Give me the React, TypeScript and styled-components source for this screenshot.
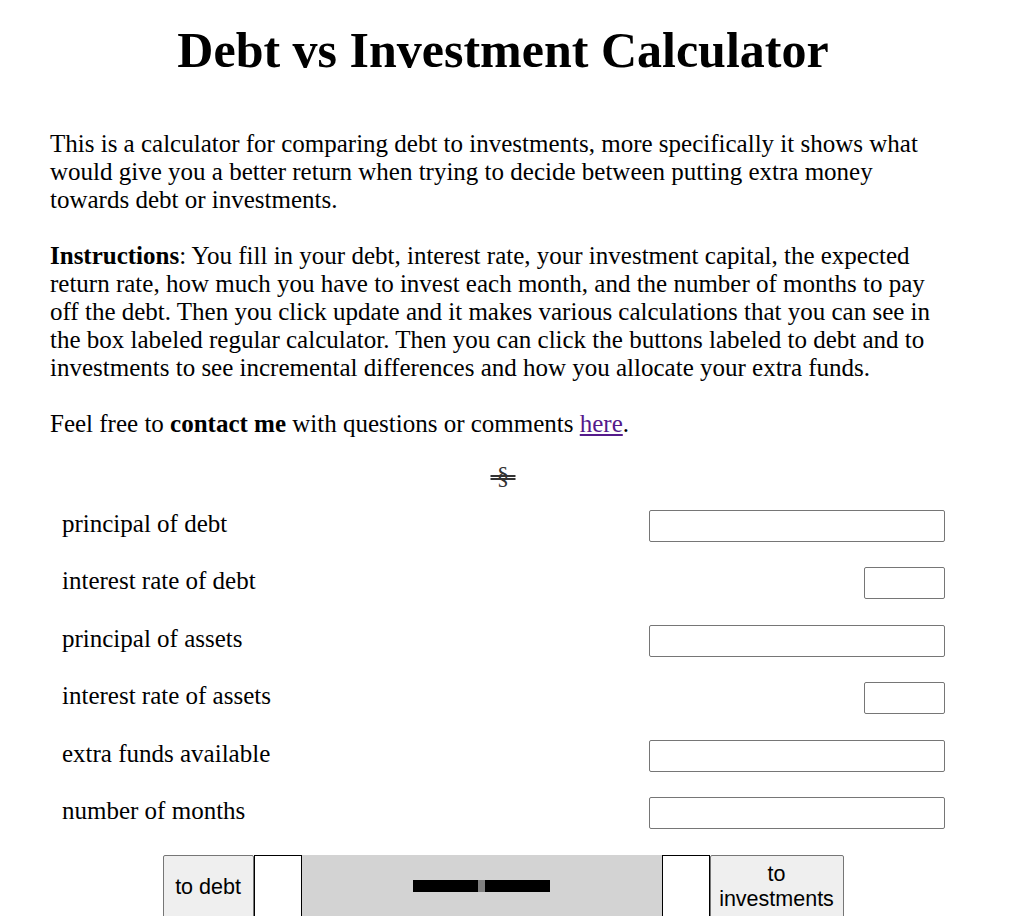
import React from "react";
import styled, { createGlobalStyle } from "styled-components";

const GlobalStyle = createGlobalStyle`
  html {
    overflow: hidden;
  }
  body {
    margin: 0;
    background: #fff;
    color: #000;
    font-family: "Liberation Serif", "Times New Roman", serif;
  }
`;

const Page = styled.div`
  width: 990px;
  padding: 0 8px;
`;

const Title = styled.h1`
  margin: 22px 0 0;
  font-size: 50px;
  line-height: 57px;
  font-weight: bold;
  text-align: center;
`;

const Content = styled.div`
  margin-left: 42px;
  width: 895px;
`;

const Para = styled.p<{ $gap: number }>`
  margin: ${(p) => p.$gap}px 0 0;
  font-size: 25px;
  line-height: 28px;
`;

const Link = styled.a`
  color: #551a8b;
  text-decoration: underline;
`;

const Currency = styled.div`
  margin-top: 24px;
  margin-left: -42px;
  width: 990px;
  text-align: center;
  font-size: 25px;
  line-height: 28px;
  color: #333;
`;

const Struck = styled.span`
  text-decoration: line-through double;
`;

const Fields = styled.div`
  margin-top: 7px;
  display: flex;
  flex-direction: column;
`;

const Row = styled.div`
  height: 57.5px;
  display: flex;
  align-items: center;
  justify-content: space-between;
  padding-left: 12px;
`;

const Label = styled.span`
  font-size: 25px;
  line-height: 28px;
  margin-bottom: 4px;
`;

const Input = styled.input<{ $small?: boolean }>`
  box-sizing: border-box;
  width: ${(p) => (p.$small ? "81px" : "296px")};
  height: 32px;
  border: 1px solid #767676;
  border-radius: 2px;
  background: #fff;
  padding: 1px 2px;
  font-size: 16px;
`;

const Controls = styled.div`
  margin-top: 13px;
  display: flex;
  justify-content: center;
  height: 64px;
`;

const Button = styled.button<{ $w: number }>`
  box-sizing: border-box;
  width: ${(p) => p.$w}px;
  height: 64px;
  padding: 0 6px;
  background: #efefef;
  border: 1px solid #767676;
  border-radius: 2px;
  font-family: "Liberation Sans", Arial, sans-serif;
  font-size: 21.5px;
  line-height: 25px;
  color: #000;
`;

const Slot = styled.div`
  box-sizing: border-box;
  width: 48px;
  height: 64px;
  background: #fff;
  border: 1px solid #000;
`;

const Track = styled.div`
  width: 360px;
  height: 64px;
  background: #d3d3d3;
  display: flex;
  align-items: center;
  justify-content: center;
`;

const Bar = styled.div`
  display: flex;
  height: 12px;
  margin-bottom: 2px;
`;

const Segment = styled.div<{ $w: number; $c: string }>`
  width: ${(p) => p.$w}px;
  background: ${(p) => p.$c};
`;

const fields = [
  { label: "principal of debt", small: false },
  { label: "interest rate of debt", small: true },
  { label: "principal of assets", small: false },
  { label: "interest rate of assets", small: true },
  { label: "extra funds available", small: false },
  { label: "number of months", small: false },
];

const App: React.FC = () => {
  return (
    <>
      <GlobalStyle />
      <Page>
        <Title>Debt vs Investment Calculator</Title>
        <Content>
          <Para $gap={51}>
            This is a calculator for comparing debt to investments, more
            specifically it shows what would give you a better return when
            trying to decide between putting extra money towards debt or
            investments.
          </Para>
          <Para $gap={28}>
            <b>Instructions</b>: You fill in your debt, interest rate, your
            investment capital, the expected return rate, how much you have to
            invest each month, and the number of months to pay off the debt.
            Then you click update and it makes various calculations that you
            can see in the box labeled regular calculator. Then you can click
            the buttons labeled to debt and to investments to see incremental
            differences and how you allocate your extra funds.
          </Para>
          <Para $gap={28}>
            Feel free to <b>contact me</b> with questions or comments{" "}
            <Link href="#">here</Link>.
          </Para>
          <Currency>
            <Struck>{"\u00a0§\u00a0"}</Struck>
          </Currency>
          <Fields>
            {fields.map((f) => (
              <Row key={f.label}>
                <Label>{f.label}</Label>
                <Input type="text" $small={f.small} />
              </Row>
            ))}
          </Fields>
        </Content>
        <Controls>
          <Button $w={91}>to debt</Button>
          <Slot />
          <Track>
            <Bar>
              <Segment $w={65} $c="#000" />
              <Segment $w={7} $c="#808080" />
              <Segment $w={65} $c="#000" />
            </Bar>
          </Track>
          <Slot />
          <Button $w={134}>to investments</Button>
        </Controls>
      </Page>
    </>
  );
};

export default App;
